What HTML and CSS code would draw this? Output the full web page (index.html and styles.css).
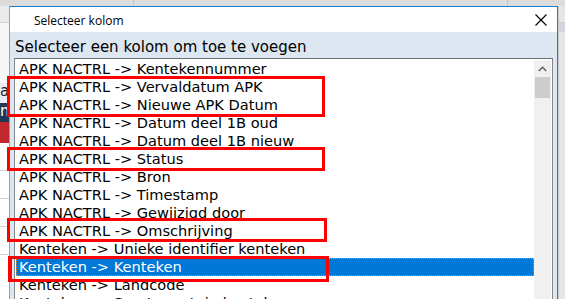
FILE: index.html
```html
<!DOCTYPE html>
<html>
	<head>
		<meta charset="UTF-8">
		<title>Selecteer kolom</title>
		<link rel="stylesheet" href="styles.css">
	</head>
	<body>

		<div class="screen">

			<!-- achtergrond boven het venster -->
			<div class="topbar">
				<span class="tb-cell tb-a"></span>
				<span class="tb-cell tb-b"></span>
				<span class="tb-cell tb-c"></span>
			</div>

			<div class="main">

				<!-- applicatie achter het venster, linkerrand -->
				<div class="behind-left">
					<div class="band band-grey"></div>
					<div class="band band-light"></div>
					<div class="band band-label">a</div>
					<div class="band band-navy">m</div>
					<div class="band band-red"></div>
					<div class="band band-row"></div>
					<div class="band band-row"></div>
					<div class="band band-row"></div>
					<div class="band band-row"></div>
				</div>

				<!-- het dialoogvenster -->
				<div class="dialog">
					<div class="titlebar">
						<span class="title">Selecteer kolom</span>
						<svg class="close" width="12" height="12" viewBox="0 0 12 12">
							<path d="M0.5 0.5 L11.5 11.5 M11.5 0.5 L0.5 11.5" stroke="#000" stroke-width="1.1" fill="none"/>
						</svg>
					</div>
					<div class="content">
						<div class="label">Selecteer een kolom om toe te voegen</div>
						<div class="listbox">
							<ul class="items">
								<li>APK NACTRL -&gt; Kentekennummer</li>
								<li>APK NACTRL -&gt; Vervaldatum APK</li>
								<li>APK NACTRL -&gt; Nieuwe APK Datum</li>
								<li>APK NACTRL -&gt; Datum deel 1B oud</li>
								<li>APK NACTRL -&gt; Datum deel 1B nieuw</li>
								<li>APK NACTRL -&gt; Status</li>
								<li>APK NACTRL -&gt; Bron</li>
								<li>APK NACTRL -&gt; Timestamp</li>
								<li>APK NACTRL -&gt; Gewijzigd door</li>
								<li>APK NACTRL -&gt; Omschrijving</li>
								<li>Kenteken -&gt; Unieke identifier kenteken</li>
								<li class="selected">Kenteken -&gt; Kenteken</li>
								<li>Kenteken -&gt; Landcode</li>
								<li>Kenteken -&gt; Soort voertuig kenteken</li>
							</ul>
							<div class="scrollbar">
								<div class="arrow">
									<svg width="9" height="6" viewBox="0 0 9 6">
										<path d="M0.8 5 L4.5 1.3 L8.2 5" stroke="#606060" stroke-width="1.4" fill="none"/>
									</svg>
								</div>
								<div class="thumb"></div>
							</div>
						</div>
					</div>
				</div>

				<!-- rechterrand achter het venster -->
				<div class="behind-right">
					<div class="rb-top"></div>
					<div class="rb-band"></div>
				</div>

			</div>

			<!-- rode markeringen over de lijst -->
			<div class="mark mark-1"></div>
			<div class="mark mark-2"></div>
			<div class="mark mark-3"></div>
			<div class="mark mark-4"></div>

		</div>

	</body>
</html>
```

FILE: styles.css
```css
*{
	margin: 0;
	padding: 0;
	box-sizing: border-box;
}

body{
	width: 565px;
	height: 299px;
	overflow: hidden;
	background-color: #ffffff;
	font-family: "DejaVu Sans", Verdana, sans-serif;
}

.screen{
	position: relative;
	width: 565px;
	height: 299px;
	overflow: hidden;
	display: flex;
	flex-direction: column;
}

/*bovenrand*/
.topbar{
	height: 6px;
	display: flex;
	background-color: #dcdcdc;
}

.tb-cell{
	display: block;
	height: 6px;
	border-right: 1px solid #c4c4c4;
}

.tb-a{
	width: 134px;
}

.tb-b{
	width: 374px;
}

.tb-c{
	flex: 1;
	border-right: none;
}

.main{
	flex: 1;
	display: flex;
}

/*linkerrand*/
.behind-left{
	width: 9px;
	display: flex;
	flex-direction: column;
	background-color: #ffffff;
	font-size: 15px;
	line-height: 17px;
	overflow: hidden;
}

.band{
	flex: none;
	border-bottom: 1px solid #d0d0d0;
}

.band-grey{
	height: 17px;
	background-color: #ebebeb;
}

.band-light{
	height: 60px;
	background-color: #f7f7f7;
	border-bottom: none;
}

.band-label{
	height: 20px;
	background-color: #e8edf3;
	color: #1a1a1a;
	border-bottom: none;
}

.band-navy{
	height: 19px;
	background-color: #1e3856;
	color: #ffffff;
	border-bottom: none;
}

.band-red{
	height: 21px;
	background-color: #c1272d;
	border-bottom: none;
}

.band-row{
	height: 28px;
}

/*dialoogvenster*/
.dialog{
	width: 549px;
	display: flex;
	flex-direction: column;
	border: 1px solid #1a80d4;
	border-left-color: #8aa3bd;
	border-bottom: none;
	background-color: #dde7f1;
}

.titlebar{
	height: 25px;
	background-color: #ffffff;
	display: flex;
	align-items: center;
	padding: 0 10px 0 24px;
}

.title{
	flex: 1;
	font-family: "Open Sans", "Liberation Sans", sans-serif;
	font-size: 12px;
	color: #000000;
	padding-top: 1px;
}

.close{
	margin-top: 1px;
}

.content{
	flex: 1;
	padding: 4px 4px 0 4px;
}

.label{
	height: 22px;
	font-size: 15px;
	line-height: 20px;
	color: #000000;
	padding-left: 1px;
	padding-top: 1px;
}

.listbox{
	height: 260px;
	display: flex;
	background-color: #ffffff;
	border: 1px solid #828790;
	border-top-color: #6d6d6d;
	padding: 1px 1px 0 1px;
}

.items{
	list-style: none;
	flex: 1;
}

.items li{
	height: 18px;
	line-height: 18px;
	font-size: 14.6px;
	color: #000000;
	padding-left: 3px;
	white-space: nowrap;
}

.items li.selected{
	background-color: #0078d7;
	color: #ffffff;
	outline: 1px dotted #f28a1e;
	outline-offset: -1px;
}

/*schuifbalk*/
.scrollbar{
	width: 17px;
	background-color: #f0f0f0;
	display: flex;
	flex-direction: column;
	align-items: center;
}

.arrow{
	height: 17px;
	display: flex;
	align-items: center;
	justify-content: center;
}

.thumb{
	width: 15px;
	height: 21px;
	background-color: #cdcdcd;
}

/*rechterrand*/
.behind-right{
	flex: 1;
	display: flex;
	flex-direction: column;
	background-color: #e6e6e6;
	border-left: 1px solid #c9c9c9;
}

.rb-top{
	height: 17px;
	border-bottom: 1px solid #cfcfcf;
}

.rb-band{
	height: 9px;
	background-color: #d3d7dc;
}

/*rode markeringen*/
.mark{
	position: absolute;
	border: 3px solid #ff0000;
}

.mark-1{
	left: 7px;
	top: 76px;
	width: 318px;
	height: 41px;
}

.mark-2{
	left: 7px;
	top: 147px;
	width: 318px;
	height: 24px;
}

.mark-3{
	left: 7px;
	top: 218px;
	width: 320px;
	height: 24px;
}

.mark-4{
	left: 8px;
	top: 256px;
	width: 321px;
	height: 26px;
	border-left-width: 4px;
}
```
